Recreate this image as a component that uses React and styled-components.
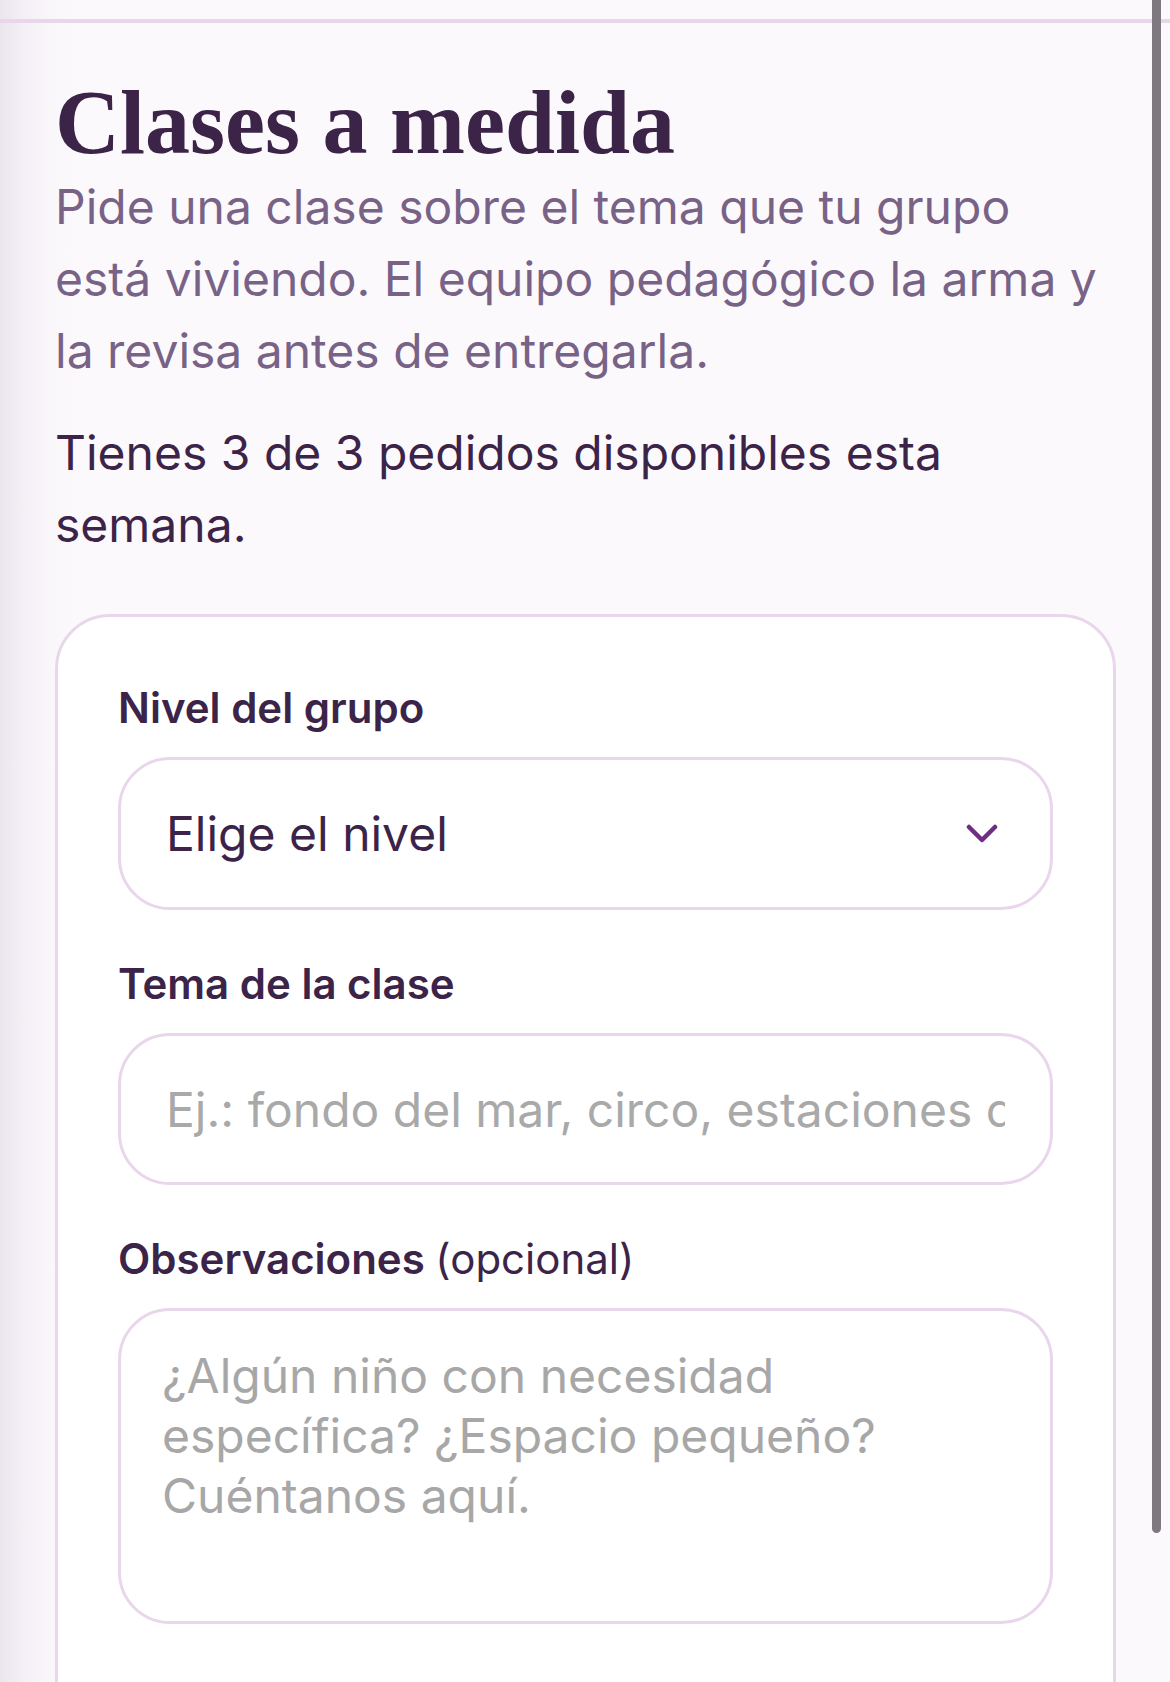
import React from 'react'
import styled, {createGlobalStyle} from 'styled-components'

const GlobalStyle = createGlobalStyle`
  html, body {
    margin: 0;
    padding: 0;
    height: 1682px;
    overflow: hidden;
  }

  body {
    font-family: Inter, "Noto Sans", sans-serif;
    background: linear-gradient(to right, #ebe6ee 0px, #f3eff5 22px, #faf7fb 50px, #fcf9fd 80px);
    -webkit-font-smoothing: antialiased;
  }

  * {
    box-sizing: border-box;
  }
`

const Page = styled.div`
  position: relative;
  height: 1682px;
  overflow: hidden;
`

const TopBar = styled.header`
  height: 23px;
  border-bottom: 4px solid #ead6eb;
`

const Main = styled.main`
  padding: 51px 54px 0 55px;
`

const Title = styled.h1`
  margin: 0;
  font-family: "Liberation Serif", "Times New Roman", serif;
  font-weight: 700;
  font-size: 90px;
  line-height: 97px;
  color: #3c2449;
`

const Intro = styled.p`
  margin: 0;
  font-size: 48px;
  line-height: 72px;
  color: #786387;
`

const Quota = styled.p`
  margin: 30px 0 0 0;
  font-size: 48px;
  line-height: 72px;
  color: #3c2449;
`

const Card = styled.form`
  margin-top: 53px;
  background: #ffffff;
  border: 3px solid #ead6ec;
  border-radius: 55px;
  padding: 59px 60px 200px 60px;
  display: flex;
  flex-direction: column;
  gap: 42px;
`

const Field = styled.div`
  display: flex;
  flex-direction: column;
  gap: 18px;
`

const Label = styled.label`
  font-size: 42px;
  line-height: 63px;
  font-weight: 600;
  color: #3c2449;
`

const Optional = styled.span`
  font-weight: 400;
`

const SelectBox = styled.div`
  height: 153px;
  border: 3px solid #ead6ec;
  border-radius: 52px;
  padding: 0 52px 0 45px;
  display: flex;
  align-items: center;
  gap: 20px;
`

const Select = styled.select`
  flex: 1;
  appearance: none;
  -webkit-appearance: none;
  border: none;
  background: transparent;
  outline: none;
  padding: 0;
  font-family: inherit;
  font-size: 48px;
  color: #3c2449;
`

const Chevron = styled.svg`
  width: 32px;
  height: 19px;
  flex-shrink: 0;
`

const TextInput = styled.input`
  height: 152px;
  width: 100%;
  border: 3px solid #ead6ec;
  border-radius: 52px;
  padding: 0 45px;
  font-family: inherit;
  font-size: 48px;
  color: #3c2449;
  background: #ffffff;
  outline: none;

  &::placeholder {
    color: #a9a9a9;
  }
`

const TextArea = styled.textarea`
  height: 316px;
  width: 100%;
  resize: none;
  border: 3px solid #ead6ec;
  border-radius: 52px;
  padding: 35px 42px 35px 41px;
  font-family: inherit;
  font-size: 48px;
  line-height: 60px;
  color: #3c2449;
  background: #ffffff;
  outline: none;

  &::placeholder {
    color: #a7a7a7;
  }
`

// the overlay scrollbar thumb of the mobile browser
const ScrollThumb = styled.div`
  position: absolute;
  top: -20px;
  right: 9px;
  width: 9px;
  height: 1553px;
  border-radius: 5px;
  background: #7d797f;
`

const App = () => {
  return (
    <Page>
      <GlobalStyle />
      <TopBar />
      <Main>
        <Title>Clases a medida</Title>
        <Intro>
          Pide una clase sobre el tema que tu grupo está viviendo. El equipo pedagógico la arma y la revisa antes de entregarla.
        </Intro>
        <Quota>Tienes 3 de 3 pedidos disponibles esta semana.</Quota>

        <Card onSubmit={(e) => e.preventDefault()}>
          <Field>
            <Label htmlFor="nivel">Nivel del grupo</Label>
            <SelectBox>
              <Select id="nivel" defaultValue="">
                <option value="" disabled>Elige el nivel</option>
                <option value="inicial">Inicial</option>
                <option value="primaria">Primaria</option>
              </Select>
              <Chevron viewBox="0 0 32 19" fill="none">
                <path d="M3 3 L16 16 L29 3" stroke="#6e2c84" strokeWidth="4.5" strokeLinecap="round" strokeLinejoin="round" />
              </Chevron>
            </SelectBox>
          </Field>

          <Field>
            <Label htmlFor="tema">Tema de la clase</Label>
            <TextInput id="tema" type="text" placeholder="Ej.: fondo del mar, circo, estaciones del año" />
          </Field>

          <Field>
            <Label htmlFor="obs">Observaciones <Optional>(opcional)</Optional></Label>
            <TextArea id="obs" placeholder="¿Algún niño con necesidad específica? ¿Espacio pequeño? Cuéntanos aquí." />
          </Field>
        </Card>
      </Main>
      <ScrollThumb />
    </Page>
  )
}

export default App
